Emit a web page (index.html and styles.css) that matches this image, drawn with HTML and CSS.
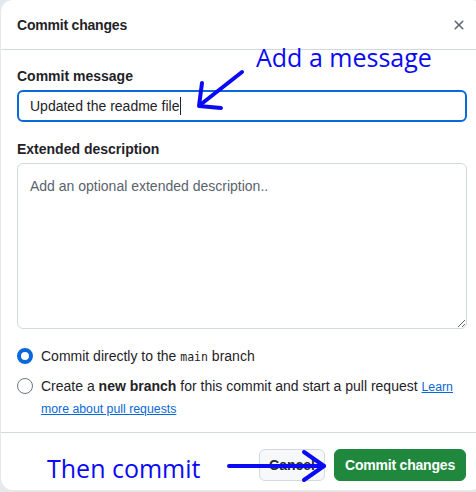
FILE: index.html
```html
<!DOCTYPE html>
<html>
<head>
<meta charset="utf-8">
<link rel="stylesheet" href="styles.css">
</head>
<body>
<div class="dialog">
  <div class="header">
    <div class="title">Commit changes</div>
    <svg class="close" width="16" height="16" viewBox="0 0 16 16"><path d="M3.72 3.72a.75.75 0 0 1 1.06 0L8 6.94l3.22-3.22a.75.75 0 1 1 1.06 1.06L9.06 8l3.22 3.22a.75.75 0 1 1-1.06 1.06L8 9.06l-3.22 3.22a.75.75 0 0 1-1.06-1.06L6.94 8 3.72 4.78a.75.75 0 0 1 0-1.06Z" fill="#59636e"/></svg>
  </div>
  <div class="body">
    <label class="label">Commit message</label>
    <div class="input">Updated the readme file<span class="caret"></span></div>
    <label class="label label2">Extended description</label>
    <textarea class="textarea" placeholder="Add an optional extended description.."></textarea>
    <div class="radios">
      <div class="radio-row">
        <span class="radio checked"></span>
        <span class="rtext">Commit directly to the <code>main</code> branch</span>
      </div>
      <div class="radio-row">
        <span class="radio"></span>
        <span class="rtext">Create a <b>new branch</b> for this commit and start a pull request <a href="#">Learn more about pull requests</a></span>
      </div>
    </div>
  </div>
  <div class="footer">
    <button class="btn">Cancel</button>
    <button class="btn primary">Commit changes</button>
  </div>
</div>
<div class="note note1">Add a message</div>
<div class="note note2">Then commit</div>
<svg class="arrows" width="476" height="492" viewBox="0 0 476 492">
  <g stroke="#0a0af5" stroke-width="4" stroke-linecap="round" stroke-linejoin="round" fill="none">
    <path d="M242 72 L200 105"/>
    <path d="M202 83 L199 106 L221 108"/>
    <path d="M229 466 L324 466"/>
    <path d="M304 452 L324 466 L304 480"/>
  </g>
</svg>
</body>
</html>
```

FILE: styles.css
```css
* { box-sizing: border-box; }
html, body { margin: 0; padding: 0; }
body {
  width: 476px;
  height: 492px;
  overflow: hidden;
  background: #e6e9ec;
  font-family: "Liberation Sans", Arial, sans-serif;
  color: #1f2328;
  font-size: 14px;
  position: relative;
}
.dialog {
  margin-left: 1px;
  width: 482px;
  height: 490px;
  background: #fff;
  border-radius: 12px;
  display: flex;
  flex-direction: column;
}
.header {
  height: 50px;
  border-bottom: 1px solid #d1d9e0;
  display: flex;
  align-items: center;
  justify-content: space-between;
  padding: 0 16px;
  flex-shrink: 0;
}
.title { font-weight: 600; font-size: 14px; letter-spacing: -0.2px; }
.body {
  padding: 16px 16px 0 16px;
  display: flex;
  flex-direction: column;
  flex: 1;
}
.label {
  font-weight: 600;
  line-height: 20px;
  display: block;
}
.label2 { margin-top: 17px; }
.input {
  margin-top: 4px;
  height: 32px;
  border: 2px solid #0969da;
  border-radius: 6px;
  padding: 0 11px;
  line-height: 28px;
  display: flex;
  align-items: center;
}
.caret {
  display: inline-block;
  width: 1px;
  height: 18px;
  background: #1f2328;
  margin-left: 1px;
}
.textarea {
  margin-top: 4px;
  height: 166px;
  width: 100%;
  border: 1px solid #d1d9e0;
  border-radius: 6px;
  padding: 12px 12px;
  font-family: inherit;
  font-size: 14px;
  line-height: 20px;
  color: #1f2328;
  resize: vertical;
  outline: none;
}
.textarea::placeholder { color: #59636e; }
.radios {
  margin-top: 17px;
  display: flex;
  flex-direction: column;
  gap: 8px;
}
.radio-row {
  display: flex;
  align-items: flex-start;
  gap: 8px;
  line-height: 21px;
}
.radio {
  width: 16px;
  height: 16px;
  border-radius: 50%;
  border: 1px solid #6e7781;
  flex-shrink: 0;
  margin-top: 2px;
  background: #fff;
}
.radio.checked { border: 4px solid #0969da; }
.rtext { padding-right: 12px; }
.rtext b { font-weight: 600; }
code {
  font-family: "DejaVu Sans Mono", "Liberation Mono", monospace;
  font-size: 11.5px;
}
a { color: #0969da; text-decoration: underline; font-size: 12.3px; }
.footer {
  border-top: 1px solid #d1d9e0;
  padding: 16px 17px 0 0;
  display: flex;
  justify-content: flex-end;
  gap: 9px;
  height: 58px;
  flex-shrink: 0;
}
.btn {
  height: 32px;
  padding: 0 9px;
  border: 1px solid #d1d9e0;
  border-radius: 6px;
  background: #f6f8fa;
  font-family: inherit;
  font-size: 14px;
  font-weight: 600;
  color: #25292e;
}
.btn.primary {
  background: #1f883d;
  border-color: #1f883d;
  color: #fff;
  padding: 0 10px;
  letter-spacing: -0.2px;
}
.note {
  position: absolute;
  color: #0a0af5;
  font-family: "Open Sans", "Noto Sans", sans-serif;
  font-size: 25px;
  line-height: 30px;
}
.note1 { left: 256px; top: 42px; }
.note2 { left: 47px; top: 453px; }
.arrows { position: absolute; left: 0; top: 0; pointer-events: none; }
```
